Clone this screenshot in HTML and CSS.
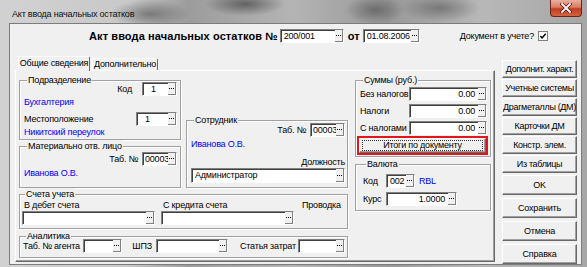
FILE: index.html
```html
<!DOCTYPE html>
<html>
<head>
  <meta charset="UTF-8">
  <title>Акт ввода начальных остатков</title>
  <link rel="stylesheet" href="styles.css">
</head>
<body>
  <div class="window">
    <div class="titlebar">
      <div class="title">Акт ввода начальных остатков</div>
      <div class="close">
        <svg width="12" height="10" viewBox="0 0 12 10">
          <path d="M2 1l8 8M10 1l-8 8" stroke="#5a1a10" stroke-width="3.4" stroke-linecap="square"/>
          <path d="M2 1l8 8M10 1l-8 8" stroke="#fff" stroke-width="1.8" stroke-linecap="square"/>
        </svg>
      </div>
    </div>

    <div class="client">
      <div class="doc-head">
        <span class="head-title">Акт ввода начальных остатков №</span>
        <div class="field f-docnum"><span class="val">200/001</span><span class="dots"></span></div>
        <span class="head-title head-from">от</span>
        <div class="field f-date"><span class="val">01.08.2006</span><span class="dots"></span></div>
        <span class="doc-label">Документ в учете?</span>
        <span class="checkbox">
          <svg width="9" height="9" viewBox="0 0 9 9"><path d="M1.5 4l2 2.2L7.5 1.5" fill="none" stroke="#000" stroke-width="1.6"/></svg>
        </span>
      </div>

      <div class="main">
        <div class="tabs-area">
          <div class="tabs">
            <div class="tab active">Общие сведения</div>
            <div class="tab">Дополнительно</div>
          </div>

          <div class="panel">
            <div class="panel-left">
              <div class="top-cols">
                <div class="col">
                  <fieldset class="group g-dept">
                    <legend>Подразделение</legend>
                    <div class="row row-end r-dept-code">
                      <span class="lbl">Код</span>
                      <div class="field f-code"><span class="val">1</span><span class="dots"></span></div>
                    </div>
                    <div class="link">Бухгалтерия</div>
                    <div class="row row-between r-dept-place">
                      <span class="lbl">Местоположение</span>
                      <div class="field f-place"><span class="val">1</span><span class="dots"></span></div>
                    </div>
                    <div class="link">Никитский переулок</div>
                  </fieldset>

                  <fieldset class="group g-mat">
                    <legend>Материально отв. лицо</legend>
                    <div class="row row-end r-mat-tab">
                      <span class="lbl">Таб. №</span>
                      <div class="field f-tab"><span class="val">00003</span><span class="dots"></span></div>
                    </div>
                    <div class="link l-mat">Иванова О.В.</div>
                  </fieldset>
                </div>

                <div class="col">
                  <fieldset class="group g-emp">
                    <legend>Сотрудник</legend>
                    <div class="row row-end r-emp-tab">
                      <span class="lbl">Таб. №</span>
                      <div class="field f-tab"><span class="val">00003</span><span class="dots"></span></div>
                    </div>
                    <div class="link l-emp">Иванова О.В.</div>
                    <div class="post-label">Должность</div>
                    <div class="field f-post"><span class="val">Администратор</span><span class="dots"></span></div>
                  </fieldset>
                </div>
              </div>

              <fieldset class="group g-acc">
                <legend>Счета учета</legend>
                <div class="acc-grid">
                  <div class="acc-col">
                    <span class="acc-lbl">В дебет счета</span>
                    <div class="field"><span class="val"></span><span class="dots"></span></div>
                  </div>
                  <div class="acc-col">
                    <span class="acc-lbl">С кредита счета</span>
                    <div class="field"><span class="val"></span><span class="dots"></span></div>
                  </div>
                  <div class="acc-col acc-last">
                    <span class="acc-lbl">Проводка</span>
                  </div>
                </div>
              </fieldset>

              <fieldset class="group g-anal">
                <legend>Аналитика</legend>
                <div class="row r-anal">
                  <span class="lbl">Таб. № агента</span>
                  <div class="field f-agent"><span class="val"></span><span class="dots"></span></div>
                  <span class="lbl lbl-shpz">ШПЗ</span>
                  <div class="field f-shpz"><span class="val"></span><span class="dots"></span></div>
                  <span class="lbl lbl-cost">Статья затрат</span>
                  <div class="field f-cost"><span class="val"></span><span class="dots"></span></div>
                </div>
              </fieldset>
            </div>

            <div class="panel-right">
              <fieldset class="group g-sum">
                <legend>Суммы (руб.)</legend>
                <div class="row sum-row">
                  <span class="lbl">Без налогов</span>
                  <div class="field f-sum num"><span class="val">0.00</span><span class="dots"></span></div>
                </div>
                <div class="row sum-row">
                  <span class="lbl">Налоги</span>
                  <div class="field f-sum num"><span class="val">0.00</span><span class="dots"></span></div>
                </div>
                <div class="row sum-row">
                  <span class="lbl">С налогами</span>
                  <div class="field f-sum num"><span class="val">0.00</span><span class="dots"></span></div>
                </div>
                <div class="totals-mark">
                  <div class="btn btn-focus"><span>Итоги по документу</span></div>
                </div>
              </fieldset>

              <fieldset class="group g-cur">
                <legend>Валюта</legend>
                <div class="row cur-row r-cur-code">
                  <span class="lbl cur-lbl">Код</span>
                  <div class="field f-cur"><span class="val">002</span><span class="dots"></span></div>
                  <span class="link cur-name">RBL</span>
                </div>
                <div class="row cur-row r-cur-rate">
                  <span class="lbl cur-lbl">Курс</span>
                  <div class="field f-rate num"><span class="val">1.0000</span><span class="dots"></span></div>
                </div>
              </fieldset>
            </div>
          </div>
        </div>

        <div class="side">
          <div class="side-group">
            <div class="btn side-btn">Дополнит. характ.</div>
            <div class="btn side-btn">Учетные системы</div>
            <div class="btn side-btn">Драгметаллы (ДМ)</div>
            <div class="btn side-btn">Карточки ДМ</div>
            <div class="btn side-btn">Констр. элем.</div>
            <div class="btn side-btn">Из таблицы</div>
          </div>
          <div class="side-group side-actions">
            <div class="btn action-btn">OK</div>
            <div class="btn action-btn">Сохранить</div>
            <div class="btn action-btn">Отмена</div>
            <div class="btn action-btn">Справка</div>
          </div>
        </div>
      </div>
    </div>
  </div>
</body>
</html>
```

FILE: styles.css
```css
* {
  box-sizing: border-box;
}

body {
  margin: 0;
  padding: 0;
  font-family: "Liberation Sans", Arial, sans-serif;
  font-size: 9px;
  letter-spacing: -0.2px;
  white-space: nowrap;
  color: #000;
  background: #a8a8a8;
}

/* Window frame (glass) */
.window {
  width: 587px;
  height: 267px;
  display: flex;
  flex-direction: column;
  overflow: hidden;
  background:
    radial-gradient(ellipse 40px 14px at 150px 14px, rgba(70, 70, 70, 0.55), transparent),
    radial-gradient(ellipse 40px 12px at 245px 4px, rgba(40, 40, 40, 0.55), transparent),
    radial-gradient(ellipse 30px 14px at 375px 10px, rgba(60, 60, 60, 0.5), transparent),
    radial-gradient(ellipse 40px 14px at 440px 8px, rgba(60, 60, 60, 0.45), transparent),
    linear-gradient(to right, #d2d2d2 0, #c8c8c8 22%, #9c9c9c 32%, #b4b4b4 50%, #989898 66%, #b8b8b8 82%, #a6a6a6 100%);
}

.titlebar {
  height: 23px;
  display: flex;
  justify-content: space-between;
  align-items: flex-start;
}

.title {
  padding: 9px 0 0 12px;
  line-height: 11px;
  color: #111;
}

.close {
  width: 32px;
  height: 17px;
  margin-right: 5px;
  display: flex;
  align-items: center;
  justify-content: center;
  border: 1px solid #6d2418;
  border-top: none;
  border-radius: 0 0 4px 4px;
  background: linear-gradient(#eab0a0, #d97b62 45%, #c13d20 55%, #d3643f);
}

.client {
  flex: 1;
  margin: 0 5px 2px 9px;
  background: #f0f0f0;
  border: 1px solid #7c7c7c;
  display: flex;
  flex-direction: column;
}

/* Document header */
.doc-head {
  height: 24px;
  display: flex;
  align-items: center;
  padding-left: 79px;
}

.head-title {
  font-weight: bold;
  font-size: 11px;
  letter-spacing: 0.1px;
  margin-right: 2px;
}

.head-from {
  margin: 0 3px 0 4px;
}

.f-docnum {
  width: 64px;
  height: 15px;
}

.f-date {
  width: 57px;
  height: 15px;
}

.f-date .val {
  padding: 0 0 0 2px;
}

.doc-label {
  margin-left: 40px;
}

.checkbox {
  width: 10px;
  height: 10px;
  margin-left: 4px;
  background: #fff;
  border: 1px solid #808080;
  display: flex;
  align-items: center;
  justify-content: center;
}

/* Inputs */
.field {
  display: flex;
  height: 14px;
  background: #fff;
  border: 1px solid;
  border-color: #808080 #fff #fff #808080;
  box-shadow: inset 1px 1px 0 #404040;
}

.field .val {
  flex: 1;
  padding: 0 2px 0 3px;
  line-height: 12px;
  overflow: hidden;
}

.field.num .val {
  text-align: right;
  padding-right: 3px;
}

.dots {
  width: 8px;
  background: #f0f0f0 url("data:image/svg+xml,%3Csvg xmlns='http://www.w3.org/2000/svg' width='8' height='12'%3E%3Cpath d='M1 5h1v1H1zM3 5h1v1H3zM5 5h1v1H5z' fill='%23000'/%3E%3C/svg%3E") center no-repeat;
  box-shadow: inset -1px -1px 0 #808080;
}

/* Tabs */
.main {
  flex: 1;
  display: flex;
  gap: 7px;
  padding: 0 4px 0 5px;
}

.tabs-area {
  width: 480px;
  padding-top: 8px;
  display: flex;
  flex-direction: column;
}

.tabs {
  height: 14px;
  display: flex;
  align-items: flex-end;
  padding-left: 3px;
}

.tab {
  height: 12px;
  width: 66px;
  margin-left: 2px;
  border: 1px solid;
  border-color: #fff #696969 transparent #fff;
  border-bottom: none;
  border-radius: 2px 2px 0 0;
  text-align: center;
  line-height: 11px;
}

.tab.active {
  position: relative;
  z-index: 1;
  height: 15px;
  width: 72px;
  margin-left: 0;
  margin-bottom: -1px;
  background: #f0f0f0;
  line-height: 13px;
}

.panel {
  height: 192px;
  display: flex;
  gap: 7px;
  padding: 3px 3px 0 3px;
  border: 1px solid;
  border-color: #fff #696969 #696969 #fff;
  box-shadow: inset -1px -1px 0 #a0a0a0;
}

.panel-left {
  width: 329px;
  display: flex;
  flex-direction: column;
}

.panel-right {
  width: 136px;
  display: flex;
  flex-direction: column;
}

.top-cols {
  display: flex;
  gap: 5px;
  align-items: flex-end;
}

.col {
  width: 162px;
  display: flex;
  flex-direction: column;
}

/* Group boxes */
.group {
  margin: 0;
  min-width: 0;
  padding: 0 3px 4px 4px;
  border: 1px solid #a0a0a0;
  box-shadow: inset 1px 1px 0 #fff, 1px 1px 0 #fff;
}

.group legend {
  padding: 0 1px;
  margin-left: 3px;
  line-height: 13px;
  background: #f0f0f0;
}

.row {
  display: flex;
  align-items: center;
  height: 14px;
}

.row-end {
  justify-content: flex-end;
}

.row-between {
  justify-content: space-between;
}

.link {
  color: #0000ff;
  line-height: 13px;
}

.g-dept {
  padding-bottom: 0;
}

.r-dept-code {
  margin-top: -5px;
}

.r-dept-code .lbl {
  margin-right: 10px;
}

.f-code {
  width: 35px;
}

.f-code .val,
.f-place .val {
  padding-left: 8px;
}

.r-dept-place {
  margin-top: 3px;
}

.f-place {
  width: 41px;
}

.g-mat {
  padding-bottom: 7px;
}

.r-mat-tab {
  margin-top: -1px;
}

.f-tab {
  width: 35px;
}

.f-tab .val {
  padding: 0 0 0 2px;
}

.r-mat-tab .lbl,
.r-emp-tab .lbl {
  margin-right: 4px;
}

.l-mat,
.l-emp {
  margin-top: 1px;
}

.g-emp {
  padding-right: 2px;
}

.r-emp-tab {
  margin-top: -4px;
}

.post-label {
  margin-top: 5px;
  line-height: 12px;
  text-align: right;
}

.f-post {
  height: 15px;
}

.g-acc {
  padding: 0 2px 3px 2px;
}

.acc-grid {
  display: flex;
  gap: 6px;
  margin-top: -2px;
}

.acc-col {
  width: 133px;
  display: flex;
  flex-direction: column;
}

.acc-last {
  width: auto;
}

.acc-lbl {
  line-height: 12px;
  padding-left: 2px;
}

.g-anal {
  margin-top: 1px;
  padding: 0 2px 4px 3px;
}

.r-anal {
  margin-top: -4px;
}

.f-agent {
  width: 41px;
  margin-left: 3px;
}

.lbl-shpz {
  margin-left: 10px;
}

.f-shpz {
  width: 75px;
  margin-left: 4px;
}

.lbl-cost {
  margin-left: 12px;
}

.f-cost {
  width: 49px;
  margin-left: 2px;
}

/* Sums */
.g-sum {
  padding: 0 3px 1px 4px;
}

.sum-row {
  justify-content: space-between;
}

.sum-row + .sum-row {
  margin-top: 3px;
}

.f-sum {
  width: 78px;
}

.totals-mark {
  margin: 1px -1px 0 -3px;
  height: 19px;
  border: 2px solid #e4141b;
}

.btn {
  background: #f0f0f0;
  border: 1px solid;
  border-color: #fff #696969 #696969 #fff;
  box-shadow: inset -1px -1px 0 #a0a0a0;
  text-align: center;
}

.btn-focus {
  height: 15px;
  padding: 1px 2px;
  display: flex;
}

.btn-focus span {
  flex: 1;
  border: 1px dotted #333;
  line-height: 9px;
}

.g-cur {
  margin-top: 1px;
  padding: 0 3px 4px 7px;
}

.r-cur-code {
  margin-top: 3px;
}

.r-cur-rate {
  margin-top: 4px;
}

.cur-lbl {
  width: 23px;
}

.f-cur {
  width: 29px;
}

.cur-name {
  margin-left: 4px;
}

.f-rate {
  width: 71px;
}

/* Side buttons */
.side {
  width: 75px;
  padding-top: 12px;
  display: flex;
  flex-direction: column;
  gap: 2px;
}

.side-group {
  display: flex;
  flex-direction: column;
  gap: 1px;
}

.side-btn {
  height: 18px;
  line-height: 16px;
  letter-spacing: -0.35px;
}

.side-actions {
  gap: 3px;
}

.action-btn {
  height: 20px;
  line-height: 18px;
}
```
